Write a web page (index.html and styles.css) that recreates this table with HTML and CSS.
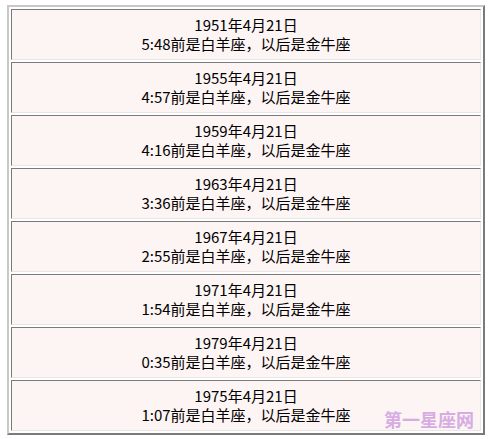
FILE: index.html
```html
<!DOCTYPE html>
<html lang="zh-CN">
<head>
<meta charset="utf-8">
<title>白羊座与金牛座交界时间</title>
<link rel="stylesheet" href="styles.css">
</head>
<body>
<div class="wrap">
  <table class="dates">
    <tr><td><span class="l">1951年4月21日</span><span class="l">5:48前是白羊座，以后是金牛座</span></td></tr>
    <tr><td><span class="l">1955年4月21日</span><span class="l">4:57前是白羊座，以后是金牛座</span></td></tr>
    <tr><td><span class="l">1959年4月21日</span><span class="l">4:16前是白羊座，以后是金牛座</span></td></tr>
    <tr><td><span class="l">1963年4月21日</span><span class="l">3:36前是白羊座，以后是金牛座</span></td></tr>
    <tr><td><span class="l">1967年4月21日</span><span class="l">2:55前是白羊座，以后是金牛座</span></td></tr>
    <tr><td><span class="l">1971年4月21日</span><span class="l">1:54前是白羊座，以后是金牛座</span></td></tr>
    <tr><td><span class="l">1979年4月21日</span><span class="l">0:35前是白羊座，以后是金牛座</span></td></tr>
    <tr><td><span class="l">1975年4月21日</span><span class="l">1:07前是白羊座，以后是金牛座</span></td></tr>
  </table>
  <div class="watermark">第一星座网</div>
</div>
</body>
</html>
```

FILE: styles.css
```css
html, body {
  margin: 0;
  padding: 0;
  background: #ffffff;
}
.wrap {
  position: relative;
  padding: 5px 0 0 7px;
  width: 478px;
}
.dates {
  width: 478px;
  border-collapse: separate;
  border-spacing: 2px;
  border-style: solid;
  border-width: 2px;
  border-color: #c8c8c8 #7a7a7a #7a7a7a #c8c8c8;
  font-family: "Liberation Sans Narrow", "Noto Sans CJK SC", sans-serif;
  font-size: 15px;
  color: #000000;
}
.dates td {
  background: #fdf4f4;
  text-align: center;
  padding: 5px 0 6px;
  border-style: solid;
  border-width: 1px;
  border-color: #7a7a7a #e6e6e6 #e6e6e6 #7a7a7a;
}
.l {
  display: block;
  line-height: 19px;
}
.watermark {
  position: absolute;
  left: 384px;
  top: 408px;
  font-family: "Noto Sans CJK SC", sans-serif;
  font-weight: 700;
  font-size: 18px;
  line-height: 22px;
  color: #d6ace3;
}
```
